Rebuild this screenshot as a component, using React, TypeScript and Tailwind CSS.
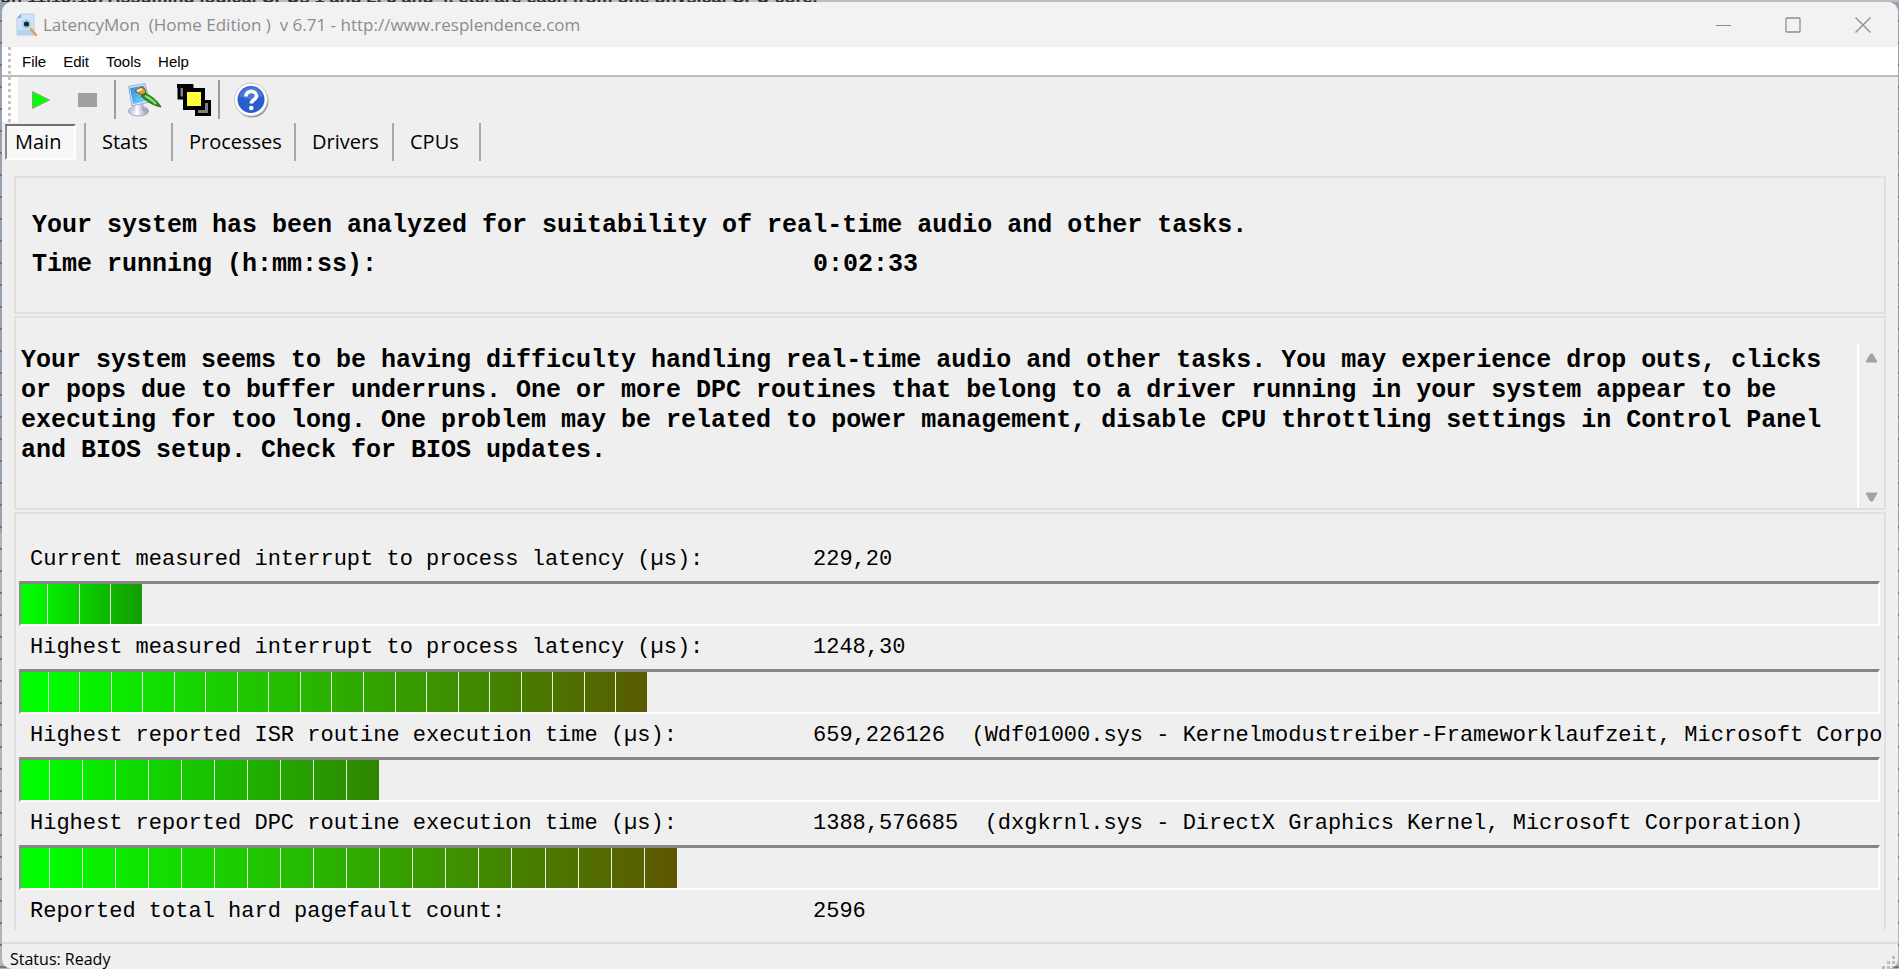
import React, { useState } from "react";

type Measurement = {
  id: string;
  label: string;
  value: string;
  detail?: string;
  percent: number;
  segments: number;
  endColor: string;
};

const menus = ["File", "Edit", "Tools", "Help"];

const tabs = [
  { name: "Main", width: "w-[81px]" },
  { name: "Stats", width: "w-[87px]" },
  { name: "Processes", width: "w-[123px]" },
  { name: "Drivers", width: "w-[98px]" },
  { name: "CPUs", width: "w-[87px]" },
];

const measurements: Measurement[] = [
  {
    id: "current-latency",
    label: "Current measured interrupt to process latency (µs):",
    value: "229,20",
    percent: 6.5,
    segments: 4,
    endColor: "#149c00",
  },
  {
    id: "highest-latency",
    label: "Highest measured interrupt to process latency (µs):",
    value: "1248,30",
    percent: 33.7,
    segments: 20,
    endColor: "#5a5a00",
  },
  {
    id: "isr-time",
    label: "Highest reported ISR routine execution time (µs):",
    value: "659,226126",
    detail:
      "(Wdf01000.sys - Kernelmodustreiber-Frameworklaufzeit, Microsoft Corporation)",
    percent: 19.3,
    segments: 11,
    endColor: "#308400",
  },
  {
    id: "dpc-time",
    label: "Highest reported DPC routine execution time (µs):",
    value: "1388,576685",
    detail: "(dxgkrnl.sys - DirectX Graphics Kernel, Microsoft Corporation)",
    percent: 35.3,
    segments: 20,
    endColor: "#5e5600",
  },
];

function AppIcon() {
  return (
    <svg width="22" height="24" viewBox="0 0 22 24" aria-hidden="true">
      <path d="M5 1h13v21H1V5z" fill="#cfe3f8" stroke="#b4cde6" />
      <path d="M5 1v4H1z" fill="#7eaede" />
      <path d="M1 17h17v5H1z" fill="#b7d2ef" />
      <path d="M14 15l6 7" stroke="#dba36c" strokeWidth="2.500" strokeLinecap="round" />
      <circle cx="10.500" cy="11" r="5.500" fill="#a9d3ea" stroke="#dfe8ee" />
      <circle cx="10.500" cy="11" r="2.600" fill="#1d2833" />
    </svg>
  );
}

function PlayIcon() {
  return (
    <svg width="20" height="20" viewBox="0 0 20 20" aria-hidden="true">
      <path d="M1.500 1.500v17L18.500 10z" fill="#00ff00" stroke="#9a9a9a" strokeWidth="1" />
    </svg>
  );
}

function StopIcon() {
  return (
    <svg width="19" height="14" viewBox="0 0 19 14" aria-hidden="true">
      <path d="M0 0h19v14H0z" fill="#a0a0a0" />
    </svg>
  );
}

function OptionsIcon() {
  return (
    <svg width="36" height="36" viewBox="0 0 36 36" aria-hidden="true">
      <defs>
        <linearGradient id="screen" x1="0" y1="0" x2="1" y2="1">
          <stop offset="0" stopColor="#2f86e0" />
          <stop offset="1" stopColor="#7fe0ff" />
        </linearGradient>
        <linearGradient id="base" x1="0" y1="0" x2="1" y2="0">
          <stop offset="0" stopColor="#b4b4d4" />
          <stop offset="0.4" stopColor="#ffffff" />
          <stop offset="1" stopColor="#9090bc" />
        </linearGradient>
      </defs>
      <ellipse cx="11.500" cy="29" rx="10" ry="5" fill="url(#base)" stroke="#a6a6c6" />
      <path d="M7 22h9l2 7H5z" fill="url(#base)" />
      <path d="M1.500 4.500L18 1.500l4.500 18.500L5 24z" fill="#dcebf8" stroke="#8fb0d4" />
      <path d="M3 6l14-2.500 4 15L6 22z" fill="url(#screen)" />
      <path d="M8 9l6-4 4 2 1 4-4 2-4-2z" fill="#e0a030" stroke="#7c5210" />
      <path d="M10 9l5-2" stroke="#fff0b0" strokeWidth="2" />
      <path d="M14 14l4-3c6 3 12 7 16 14-6-1-14-5-20-11z" fill="#2c9128" stroke="#1d6f1d" />
      <path d="M18 14c5 2 8 5 11 8" fill="none" stroke="#8fe070" strokeWidth="2" />
    </svg>
  );
}

function WindowsIcon() {
  return (
    <svg width="35" height="34" viewBox="0 0 35 34" aria-hidden="true">
      <defs>
        <pattern id="dither" width="4" height="4" patternUnits="userSpaceOnUse">
          <path d="M0 0h4v4H0z" fill="#ffff00" />
          <path d="M0 0h2v2H0zM2 2h2v2H2z" fill="#ffff78" />
        </pattern>
      </defs>
      <path d="M2 3h13v12H2z" fill="#808080" stroke="#000" strokeWidth="3" />
      <path d="M0 1h16v4H0z" />
      <path d="M19.500 18.500h13v13h-13z" fill="#808080" stroke="#000" strokeWidth="3" />
      <path d="M8 7h18v18H8z" fill="url(#dither)" stroke="#000" strokeWidth="4" />
    </svg>
  );
}

function HelpIcon() {
  return (
    <svg width="37" height="38" viewBox="0 0 37 38" aria-hidden="true">
      <circle cx="19" cy="20" r="16.500" fill="#8f8f8f" />
      <circle cx="18" cy="18.500" r="16.500" fill="#fff" stroke="#c6c6c6" />
      <circle cx="18" cy="18.500" r="13.500" fill="#2a5ccb" />
      <path d="M6 15a12.500 12.500 0 0 1 24 0c-7 4-17 4-24 0z" fill="#4a78d8" />
      <path
        d="M13 15.500c0-7 10.500-6.500 10.500-.5 0 4-5.200 3.500-5.200 7.500"
        fill="none"
        stroke="#fff"
        strokeWidth="3.600"
      />
      <circle cx="18.300" cy="27" r="2.300" fill="#fff" />
    </svg>
  );
}

function Grip() {
  return (
    <span
      aria-hidden="true"
      className="w-[3px] self-stretch bg-[repeating-linear-gradient(to_bottom,#c4c4c4_0px,#c4c4c4_3px,transparent_3px,transparent_6px)]"
    />
  );
}

function ToolButton({
  label,
  width,
  children,
}: {
  label: string;
  width: string;
  children: React.ReactNode;
}) {
  return (
    <button
      aria-label={label}
      className={`flex h-full items-center justify-center ${width}`}
    >
      {children}
    </button>
  );
}

function Meter({ item }: { item: Measurement }) {
  return (
    <div
      role="meter"
      aria-labelledby={item.id}
      aria-valuenow={item.percent}
      aria-valuemin={0}
      aria-valuemax={100}
      className="mr-1 ml-[3px] h-[45px] border-t-3 border-r-2 border-b-2 border-l-2 border-t-[#868686] border-r-white border-b-white border-l-[#8e8e8e]"
    >
      <div
        className="flex h-full overflow-hidden"
        style={{
          width: `${item.percent}%`,
          backgroundImage: `linear-gradient(to right, #00ff00 3%, ${item.endColor})`,
        }}
      >
        {Array.from({ length: item.segments }, (_, i) => (
          <span
            key={i}
            className="flex-1 border-r border-[#e4f5df] first:-ml-1 last:border-r-0"
          />
        ))}
      </div>
    </div>
  );
}

export default function App() {
  const [activeTab, setActiveTab] = useState("Main");

  return (
    <div className="flex h-screen flex-col overflow-hidden bg-[repeating-linear-gradient(to_bottom,transparent_0px,transparent_20px,#6f7680_20px,#6f7680_22px),linear-gradient(to_bottom,#98a3b2_55%,#b4b4b4_55%)] font-['Open_Sans',sans-serif] text-black">
      {/* sliver of the window behind this one */}
      <div
        aria-hidden="true"
        className="flex h-[2px] shrink-0 items-end overflow-hidden bg-[#bdbdbd] font-['Liberation_Sans',sans-serif] text-[18px] leading-[10px] font-bold whitespace-nowrap text-[#303030]"
      >
        on 11.13:15) Assuming logical CPUs 1 and 2, 3 and 4, etc. are each from
        one physical CPU core.
      </div>
      <div className="mr-px ml-[2px] flex min-h-0 flex-1 flex-col overflow-hidden rounded-[10px] bg-[#efefef]">
        <header className="flex h-[45px] shrink-0 items-center bg-[#f2f2f2] pl-[14px] text-[#8c8c8c]">
          <AppIcon />
          <h1 className="ml-[5px] flex-1 text-[17px] leading-[22px] whitespace-pre">
            {"LatencyMon  (Home Edition )  v 6.71 - http://www.resplendence.com"}
          </h1>
          <button aria-label="Minimize" className="flex h-full w-[70px] items-center justify-center">
            <svg width="16" height="16" viewBox="0 0 16 16" aria-hidden="true">
              <path d="M1 8.500h15" stroke="#8c8c8c" />
            </svg>
          </button>
          <button aria-label="Maximize" className="flex h-full w-[70px] items-center justify-center">
            <svg width="16" height="16" viewBox="0 0 16 16" aria-hidden="true">
              <rect x="1" y="1" width="14" height="14" rx="1" fill="none" stroke="#8c8c8c" strokeWidth="1.300" />
            </svg>
          </button>
          <button aria-label="Close" className="flex h-full w-[70px] items-center justify-center">
            <svg width="16" height="16" viewBox="0 0 16 16" aria-hidden="true">
              <path d="M.5.5l15 15M15.500.5l-15 15" stroke="#8c8c8c" strokeWidth="1.300" />
            </svg>
          </button>
        </header>

        <nav className="flex h-[30px] shrink-0 items-center border-b-2 border-[#bcbcba] bg-white pl-[6px] font-['Liberation_Sans',sans-serif] text-[15px]">
          <Grip />
          <div className="flex gap-[17px] pt-[2px] pl-[11px]">
            {menus.map((m) => (
              <button key={m}>{m}</button>
            ))}
          </div>
        </nav>

        <div className="flex h-[45px] shrink-0 items-center">
          <div className="flex h-full w-4 bg-white pl-[6px]">
            <Grip />
          </div>
          <ToolButton label="Start" width="w-[46px]">
            <PlayIcon />
          </ToolButton>
          <ToolButton label="Stop" width="w-[46px]">
            <StopIcon />
          </ToolButton>
          <span className="ml-1 h-[39px] w-[2px] bg-[#9c9c9c]" />
          <ToolButton label="Options" width="w-[58px]">
            <OptionsIcon />
          </ToolButton>
          <ToolButton label="Windows" width="w-[40px]">
            <WindowsIcon />
          </ToolButton>
          <span className="ml-1 h-[39px] w-[2px] bg-[#9c9c9c]" />
          <ToolButton label="Help" width="w-[62px]">
            <HelpIcon />
          </ToolButton>
        </div>

        <div role="tablist" className="flex h-[40px] shrink-0 items-center pl-[3px] text-[20px]">
          {tabs.map((t) => (
            <div
              key={t.name}
              className={`flex h-[38px] items-center border-r-2 border-[#a8a8a8] ${t.width}`}
            >
              <button
                role="tab"
                aria-selected={activeTab === t.name}
                onClick={() => setActiveTab(t.name)}
                className={
                  activeTab === t.name
                    ? "mr-2 h-[36px] flex-1 border-2 border-t-[#707070] border-r-white border-b-white border-l-[#8a8a8a] bg-[#f8f8f8] pl-2 text-left"
                    : "h-[36px] flex-1 pl-4 text-left"
                }
              >
                {t.name}
              </button>
            </div>
          ))}
        </div>

        <main className="mt-[14px] mr-3 ml-3 flex min-h-0 flex-1 flex-col gap-[2px] font-['Liberation_Mono',monospace]">
          <section className="h-[138px] shrink-0 border-2 border-[#e0e0e0] px-4 pt-[28px] text-[25px] leading-[39px] font-bold">
            <p>
              Your system has been analyzed for suitability of real-time audio
              and other tasks.
            </p>
            <p className="flex">
              <span className="w-[781px]">Time running (h:mm:ss):</span>
              <span>0:02:33</span>
            </p>
          </section>

          <section className="flex h-[194px] shrink-0 border-2 border-[#e0e0e0] pt-[26px]">
            <p className="flex-1 pt-[2px] pr-[26px] pl-[5px] text-[25px] leading-[30px] font-bold">
              Your system seems to be having difficulty handling real-time audio
              and other tasks. You may experience drop outs, clicks or pops due
              to buffer underruns. One or more DPC routines that belong to a
              driver running in your system appear to be executing for too long.
              One problem may be related to power management, disable CPU
              throttling settings in Control Panel and BIOS setup. Check for BIOS
              updates.
            </p>
            <div className="flex w-[27px] flex-col items-center justify-between border-l-2 border-white pt-[9px] pb-[6px]">
              <button aria-label="Scroll up">
                <svg width="13" height="10" viewBox="0 0 13 10" aria-hidden="true">
                  <path d="M5.500 1h2L12 9H1z" fill="#a3a3a3" stroke="#a3a3a3" strokeLinejoin="round" />
                </svg>
              </button>
              <button aria-label="Scroll down">
                <svg width="13" height="10" viewBox="0 0 13 10" aria-hidden="true">
                  <path d="M5.500 9h2L12 1H1z" fill="#a3a3a3" stroke="#a3a3a3" strokeLinejoin="round" />
                </svg>
              </button>
            </div>
          </section>

          <section className="min-h-0 flex-1 overflow-hidden border-2 border-b-0 border-[#e0e0e0] pt-[24px] text-[22px] whitespace-nowrap">
            {measurements.map((item) => (
              <div key={item.id}>
                <div className="flex h-[43px] items-center pl-[14px]">
                  <span id={item.id} className="w-[783px] shrink-0">
                    {item.label}
                  </span>
                  <span className="whitespace-pre">
                    {item.detail ? `${item.value}  ${item.detail}` : item.value}
                  </span>
                </div>
                <Meter item={item} />
              </div>
            ))}
            <div className="flex h-[43px] items-center pl-[14px]">
              <span className="w-[783px] shrink-0">
                Reported total hard pagefault count:
              </span>
              <span>2596</span>
            </div>
          </section>
        </main>

        <footer className="mt-[12px] flex h-[27px] shrink-0 items-end justify-between border-t-2 border-[#dcdcdc] pl-2 text-[16px] leading-[20px]">
          <span>Status: Ready</span>
          <svg width="16" height="16" viewBox="0 0 16 16" aria-hidden="true">
            <path
              d="M10 3h3v3h-3zM5 8h3v3H5zM10 8h3v3h-3zM0 13h3v3H0zM5 13h3v3H5zM10 13h3v3h-3z"
              fill="#bdbdbd"
            />
          </svg>
        </footer>
      </div>
    </div>
  );
}
